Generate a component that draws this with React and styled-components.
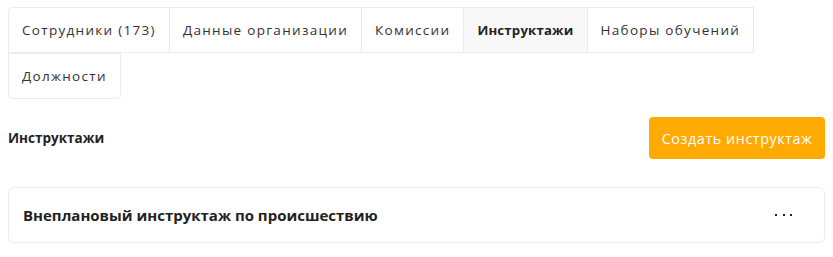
import React from "react";
import styled, { createGlobalStyle } from "styled-components";

const Global = createGlobalStyle`
  body {
    margin: 0;
    padding: 7px 8px;
    background: #fff;
    font-family: "Open Sans", "Lato", sans-serif;
    color: #2b2b2b;
  }
`;

const Page = styled.div`
  width: 817px;
`;

const Tabs = styled.div`
  display: flex;
  flex-wrap: wrap;
`;

const Tab = styled.div`
  height: 46px;
  padding: 0 13px;
  display: flex;
  align-items: center;
  box-sizing: border-box;
  border: 1px solid #ececec;
  margin: 0 -1px 0 0;
  border-radius: ${(p) => p.$radius || "0"};
  background: ${(p) => (p.$active ? "#f8f8f8" : "#fff")};
  font-size: ${(p) => (p.$active ? "13.2px" : "13.5px")};
  letter-spacing: ${(p) => (p.$active ? "0.2px" : "1.3px")};
  font-weight: ${(p) => (p.$active ? 700 : 400)};
  color: ${(p) => (p.$active ? "#222" : "#333")};
  white-space: nowrap;
`;

const Header = styled.div`
  display: flex;
  justify-content: space-between;
  align-items: center;
  margin-top: 18px;
`;

const Title = styled.div`
  font-size: 13.5px;
  font-weight: 700;
  color: #222;
`;

const CreateButton = styled.button`
  height: 42px;
  width: 176px;
  border: none;
  border-radius: 4px;
  background: #ffaa00;
  color: #fff;
  font-family: inherit;
  font-size: 14.3px;
  letter-spacing: 0.6px;
  cursor: pointer;
`;

const Card = styled.div`
  margin-top: 28px;
  height: 56px;
  box-sizing: border-box;
  border: 1px solid #ececec;
  border-radius: 6px;
  display: flex;
  align-items: center;
  justify-content: space-between;
  padding: 0 32px 0 14px;
  box-shadow: 0 1px 2px rgba(0, 0, 0, 0.03);
`;

const CardTitle = styled.div`
  font-size: 15px;
  font-weight: 700;
  color: #222;
`;

const Dots = styled.div`
  display: flex;
  gap: 5.5px;
  span {
    width: 2px;
    height: 2px;
    background: #222;
  }
`;

const tabs = [
  { label: "Сотрудники (173)", radius: "4px 0 0 0" },
  { label: "Данные организации" },
  { label: "Комиссии" },
  { label: "Инструктажи", active: true },
  { label: "Наборы обучений" },
  { label: "Должности", radius: "0 0 4px 4px" },
];

export default function App() {
  return (
    <Page>
      <Global />
      <Tabs>
        {tabs.map((t) => (
          <Tab key={t.label} $active={t.active} $radius={t.radius}>
            {t.label}
          </Tab>
        ))}
      </Tabs>
      <Header>
        <Title>Инструктажи</Title>
        <CreateButton>Создать инструктаж</CreateButton>
      </Header>
      <Card>
        <CardTitle>Внеплановый инструктаж по происшествию</CardTitle>
        <Dots>
          <span />
          <span />
          <span />
        </Dots>
      </Card>
    </Page>
  );
}
